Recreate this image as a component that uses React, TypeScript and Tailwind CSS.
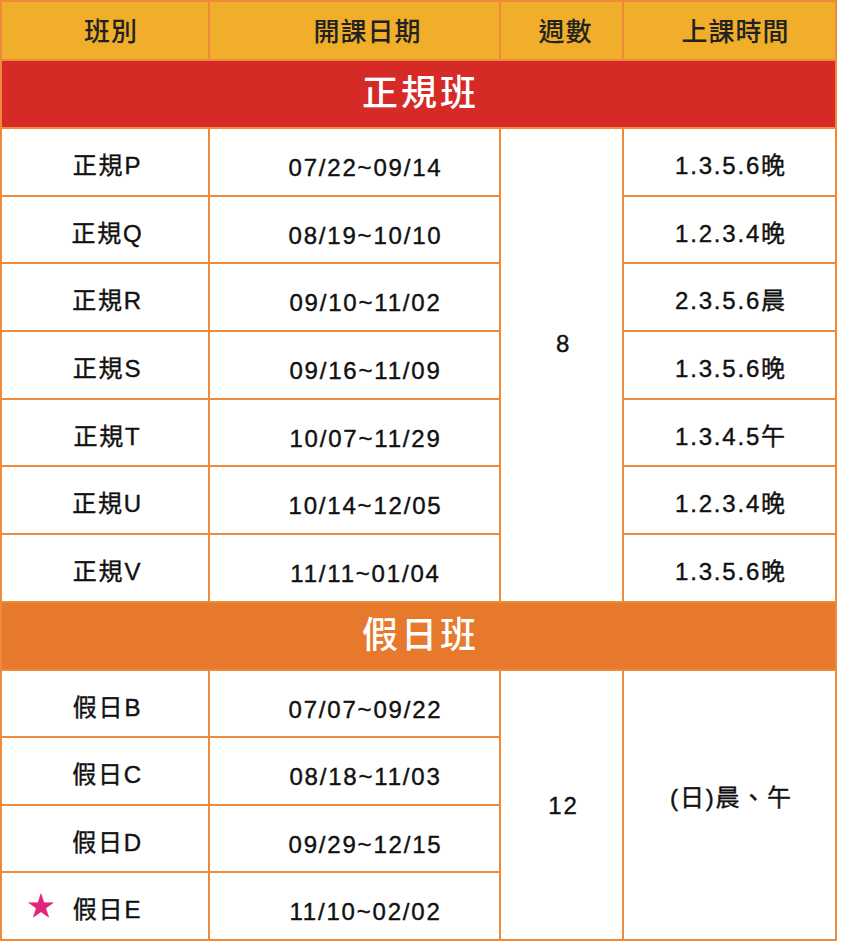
import React from 'react';

const font = { fontFamily: '"Liberation Sans", "Noto Sans CJK TC", sans-serif' };

const regular = [
  { name: '正規P', date: '07/22~09/14', time: '1.3.5.6晚' },
  { name: '正規Q', date: '08/19~10/10', time: '1.2.3.4晚' },
  { name: '正規R', date: '09/10~11/02', time: '2.3.5.6晨' },
  { name: '正規S', date: '09/16~11/09', time: '1.3.5.6晚' },
  { name: '正規T', date: '10/07~11/29', time: '1.3.4.5午' },
  { name: '正規U', date: '10/14~12/05', time: '1.2.3.4晚' },
  { name: '正規V', date: '11/11~01/04', time: '1.3.5.6晚' },
];

const holiday = [
  { name: '假日B', date: '07/07~09/22' },
  { name: '假日C', date: '08/18~11/03' },
  { name: '假日D', date: '09/29~12/15' },
  { name: '假日E', date: '11/10~02/02', star: true },
];

const cell = 'border-r-2 border-b-2 border-[#ee8a3a] flex items-center justify-center';

const App = () => {
  return (
    <div className="w-[842px] h-[944px] bg-white overflow-hidden" style={font}>
      <div className="w-[837px] border-l-2 border-[#ee8a3a] text-[#111]">
        {/* Header */}
        <div className="flex h-[61px] border-t-2 border-[#ee8a3a] bg-[#f0ae2a] text-[26px] font-medium text-[#222] tracking-[1px]">
          <div className={`${cell} w-[208px] pt-[4px] pl-[12px]`}>班別</div>
          <div className={`${cell} w-[291px] pt-[4px] pl-[26px]`}>開課日期</div>
          <div className={`${cell} w-[123px] pt-[4px] pl-[8px]`}>週數</div>
          <div className={`${cell} w-[213px] pt-[4px] pl-[12px]`}>上課時間</div>
        </div>

        {/* 正規班 */}
        <div className="h-[68px] w-[835px] bg-[#d62a27] border-r-2 border-b-2 border-[#ee8a3a] flex items-center justify-center pl-[4px] text-white text-[36px] font-medium tracking-[3px]">
          正規班
        </div>
        <div className="flex text-[24px] tracking-[1.8px] [-webkit-text-stroke:0.4px_#111]">
          <div className="flex flex-col">
            {regular.map((r) => (
              <div key={r.name} className="flex h-[67.7px]">
                <div className={`${cell} w-[208px] pt-[8px] pl-[5px]`}>{r.name}</div>
                <div className={`${cell} w-[291px] pt-[12px] pl-[22px]`}>{r.date}</div>
              </div>
            ))}
          </div>
          <div className={`${cell} w-[123px] !items-start pt-[197px] pl-[4px]`}>8</div>
          <div className="flex flex-col">
            {regular.map((r, i) => (
              <div key={i} className={`${cell} w-[213px] h-[67.7px] pt-[8px] pl-[3px]`}>
                {r.time}
              </div>
            ))}
          </div>
        </div>

        {/* 假日班 */}
        <div className="h-[68px] w-[835px] bg-[#e6792b] border-r-2 border-b-2 border-[#ee8a3a] flex items-center justify-center pl-[4px] text-white text-[36px] font-medium tracking-[3px]">
          假日班
        </div>
        <div className="flex text-[24px] tracking-[1.8px] [-webkit-text-stroke:0.4px_#111]">
          <div className="flex flex-col">
            {holiday.map((r) => (
              <div key={r.name} className="flex h-[67.5px]">
                <div className={`${cell} w-[208px] pt-[8px] pl-[5px] relative`}>
                  {r.star && (
                    <span className="absolute left-[25px] top-[20px] text-[28px] leading-none text-[#e0267a] [-webkit-text-stroke:0px]">
                      ★
                    </span>
                  )}
                  {r.name}
                </div>
                <div className={`${cell} w-[291px] pt-[12px] pl-[22px]`}>{r.date}</div>
              </div>
            ))}
          </div>
          <div className={`${cell} w-[123px] pt-[2px] pl-[4px]`}>12</div>
          <div className={`${cell} w-[213px] pb-[14px] pl-[4px]`}>(日)晨、午</div>
        </div>
      </div>
    </div>
  );
};

export default App;
